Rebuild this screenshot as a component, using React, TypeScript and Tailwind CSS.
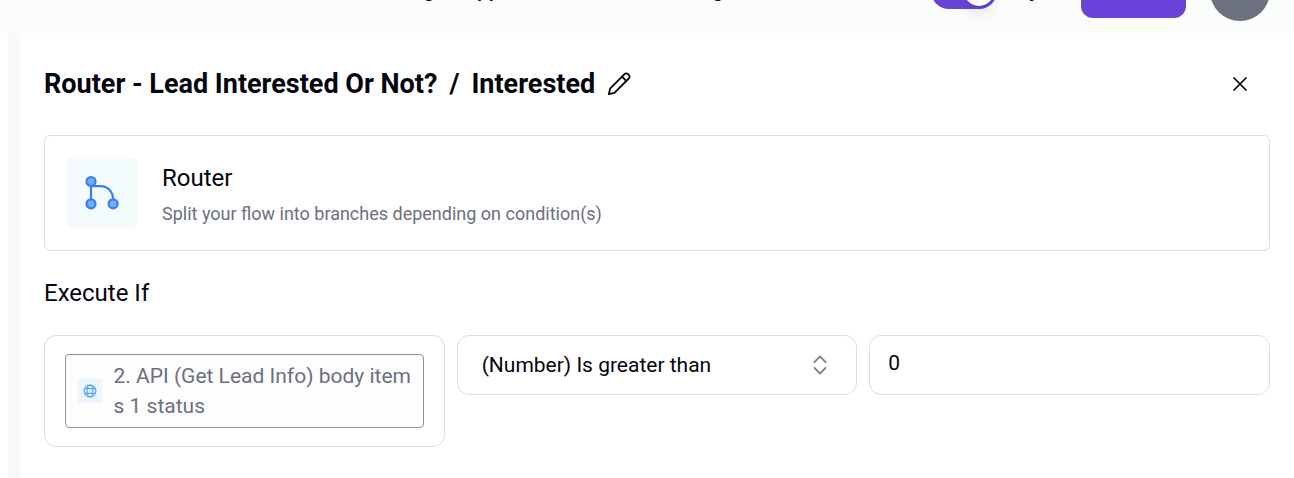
import { ReactNode } from 'react';
import { X } from 'lucide-react';

function PencilIcon() {
  return (
    <svg className="h-6 w-6" viewBox="0 0 24 24" fill="none" stroke="#05050f" strokeWidth="1.8" strokeLinecap="round" strokeLinejoin="round">
      <path d="M1.800 22.200l1.300-5.600L17.500 2.200a2.500 2.500 0 0 1 3.600 0l.7.7a2.500 2.500 0 0 1 0 3.600L7.400 20.900z" />
      <path d="M15 4.700l4.300 4.300" />
    </svg>
  );
}

function RouterIcon() {
  return (
    <svg className="h-9 w-9" viewBox="0 0 36 36" fill="none" stroke="#3b7df8" strokeWidth="2.2">
      <path d="M7 7.500v22M7 12.100h9.500c7 0 12.500 5.500 12.500 12.900v4.500" />
      <circle cx="7" cy="7.500" r="4.500" fill="#6cb4ea" />
      <circle cx="7" cy="29.800" r="4.500" fill="#6cb4ea" />
      <circle cx="29.100" cy="29.800" r="4.500" fill="#6cb4ea" />
    </svg>
  );
}

function GlobeIcon() {
  return (
    <svg className="h-3.5 w-3.5" viewBox="0 0 14 14" fill="none" stroke="#54a6fa" strokeWidth="1.2">
      <circle cx="7" cy="7" r="5.900" />
      <ellipse cx="7" cy="7" rx="3" ry="5.900" />
      <path d="M1.600 4.700h10.800M1.600 9.300h10.800" />
    </svg>
  );
}

function Field({ className, children }: { className: string; children: ReactNode }) {
  return <div className={`rounded-xl border border-[#dcdce2] ${className}`}>{children}</div>;
}

export default function App() {
  return (
    <div className="flex h-[478px] w-[1294px] flex-col overflow-hidden bg-white font-[Roboto,sans-serif] text-[#05050f]">
      {/* Top bar, scrolled most of the way out of view */}
      <header className="flex h-[33px] shrink-0 flex-col justify-end overflow-hidden bg-[#fbfdfc]">
        <div className="flex h-[84px] shrink-0 items-center">
          <div className="ml-[423px] flex w-[508px] text-[21px] font-medium">
            <span className="w-[54px]">g</span>
            <span className="w-[235px]">pp</span>
            <span>g</span>
          </div>
          <div className="flex h-9 w-[66px] items-center justify-end rounded-full bg-[#6943d9] pr-[3px]">
            <div className="h-[30px] w-[30px] rounded-full bg-white shadow-[0_10px_15px_-3px_rgba(0,0,0,0.12)]" />
          </div>
          <span className="ml-8 w-[52px] text-[21px] font-medium">y</span>
          <div className="h-[54px] w-[105px] rounded-xl bg-[#6943d9]" />
          <div className="ml-6 h-[60px] w-[60px] rounded-full bg-[#6c7280]" />
        </div>
      </header>

      <div className="flex min-h-0 flex-1 pl-2">
        <div className="w-3 shrink-0 bg-[#f9f9f9]" />

        <main className="flex-1 pl-6 pr-6">
          <div className="flex h-[102px] items-center justify-between pr-[18px]">
            <div className="flex items-center">
              <h1 className="whitespace-pre text-[27px] font-bold leading-8">Router - Lead Interested Or Not?</h1>
              <span className="ml-3 text-[27px] font-bold leading-8">/</span>
              <span className="ml-3 text-[27px] font-bold leading-8">Interested</span>
              <button className="ml-3">
                <PencilIcon />
              </button>
            </div>
            <button>
              <X className="h-6 w-6" strokeWidth={1.7} />
            </button>
          </div>

          {/* Step summary */}
          <section className="flex h-[116px] items-center rounded-md border border-[#dcdce2] pl-[22px]">
            <div className="mb-0.5 flex h-[71px] w-[70px] items-center justify-center rounded-md bg-[#f3fbfd]">
              <RouterIcon />
            </div>
            <div className="ml-[25px] mt-1.5">
              <h2 className="text-2xl leading-9">Router</h2>
              <p className="text-lg leading-9 text-[#6c7080]">Split your flow into branches depending on condition(s)</p>
            </div>
          </section>

          <h3 className="mt-6 text-2xl leading-9">Execute If</h3>

          <div className="mt-6 grid grid-cols-3 items-start gap-3">
            <Field className="h-28 px-5 py-[18px]">
              <div className="flex h-[74px] items-center rounded border border-[#939396] bg-[#fdfdfe] pl-3">
                <div className="flex h-6 w-6 items-center justify-center bg-[#edf6ff]">
                  <GlobeIcon />
                </div>
                <p className="ml-[11.5px] text-[21px] leading-[30px] text-[#6c7080]">
                  2. API (Get Lead Info) body item
                  <br />s 1 status
                </p>
              </div>
            </Field>
            <Field className="flex h-[60px] items-center justify-between pl-6 pr-7">
              <span className="text-[21px] leading-[30px]">(Number) Is greater than</span>
              <svg className="h-5 w-4" viewBox="0 0 16 20" fill="none" stroke="#858588" strokeWidth="1.800" strokeLinecap="round" strokeLinejoin="round">
                <path d="M2.500 7L8 1.500 13.500 7M2.500 13L8 18.500 13.500 13" />
              </svg>
            </Field>
            <Field className="h-[60px] px-[18px] pt-3">
              <span className="block text-[21px] leading-[30px]">0</span>
            </Field>
          </div>
        </main>
      </div>
    </div>
  );
}
